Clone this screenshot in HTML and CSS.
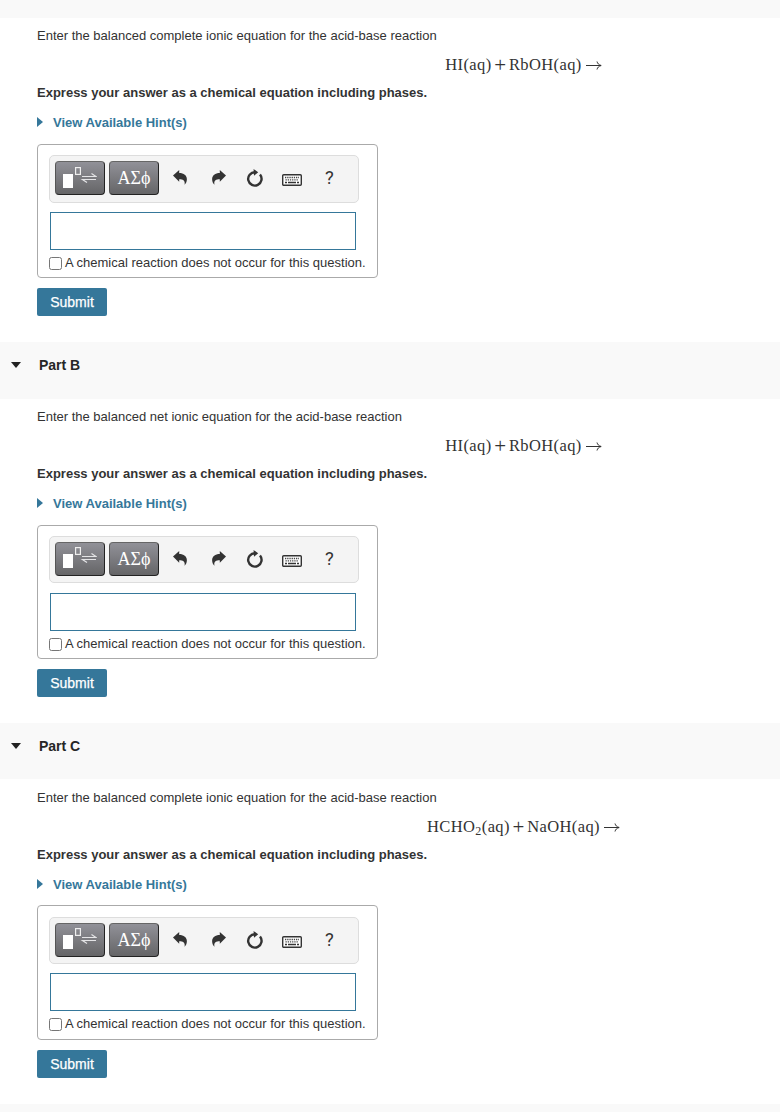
FILE: index.html
```html
<!DOCTYPE html>
<html lang="en">
<head>
    <meta charset="UTF-8">
    <meta name="viewport" content="width=device-width, initial-scale=1.0">
    <title>Acid-Base Reactions</title>
    <link rel="stylesheet" href="styles.css">
</head>
<body>

<!-- Shared icons -->
<svg class="sprite" aria-hidden="true">
    <symbol id="icon-template" viewBox="0 0 34 24">
        <rect x="0" y="9" width="10" height="14" fill="#fff"/>
        <rect x="12.6" y="2.6" width="4.8" height="6.8" fill="none" stroke="#eee" stroke-width="1.2"/>
        <path d="M19 11.500h14L28.500 8.600M33 14.500H19.500l4.500 3" fill="none" stroke="#e4e4e6" stroke-width="1.2"/>
    </symbol>
    <symbol id="icon-undo" viewBox="0 0 14 15">
        <path d="M0 5.400L6.200 0v3c5 0 8.200 2.800 7.600 7.300-.2 1.700-.9 3.200-2.300 4.400.8-3.500-.5-5.500-5.300-5.500v2.500z" fill="#333"/>
    </symbol>
    <symbol id="icon-reset" viewBox="0 0 18 18">
        <path d="M9 3.200A6.700 6.700 0 1 0 14 5.600" fill="none" stroke="#333" stroke-width="2.400"/>
        <path d="M7.600 0l4.600 3.200-4.200 3.600z" fill="#333"/>
    </symbol>
    <symbol id="icon-keyboard" viewBox="0 0 20 12">
        <rect x=".7" y=".7" width="18.600" height="10.600" rx="1" fill="#fff" stroke="#333" stroke-width="1.400"/>
        <path d="M3 3.500h14M3.500 5.800h13" stroke="#444" stroke-width="1.300" stroke-dasharray="1.300 .9"/>
        <path d="M3 8.500h2M6 8.500h8M15 8.500h2" stroke="#333" stroke-width="1.300"/>
    </symbol>
    <symbol id="icon-arrow" viewBox="0 0 16 10">
        <path d="M0 5.500h15M11 1.500c.5 2 1.700 3.300 4.200 4-2.500.7-3.700 2-4.200 4" fill="none" stroke="#333" stroke-width="1"/>
    </symbol>
</svg>

<main class="parts">
    <section class="part">
        <header class="part-header part-header-cut"></header>
        <div class="part-body">
            <p class="question">Enter the balanced complete ionic equation for the acid-base reaction</p>
            <div class="equation">HI(aq)<span class="plus">+</span>RbOH(aq)<svg class="yields"><use href="#icon-arrow"/></svg></div>
            <p class="instructions">Express your answer as a chemical equation including phases.</p>
            <a class="hints"><span class="hint-marker"></span>View Available Hint(s)</a>
            <div class="answer-box">
                <div class="toolbar">
                    <button class="tool-btn"><svg class="template-icon"><use href="#icon-template"/></svg></button>
                    <button class="tool-btn greek">ΑΣϕ</button>
                    <svg class="icon undo"><use href="#icon-undo"/></svg>
                    <svg class="icon redo"><use href="#icon-undo"/></svg>
                    <svg class="icon reset"><use href="#icon-reset"/></svg>
                    <svg class="icon keyboard"><use href="#icon-keyboard"/></svg>
                    <span class="help">?</span>
                </div>
                <div class="answer-input"></div>
                <label class="no-reaction"><input type="checkbox">A chemical reaction does not occur for this question.</label>
            </div>
            <button class="submit">Submit</button>
        </div>
    </section>

    <section class="part">
        <header class="part-header"><span class="collapse-marker"></span><h2>Part B</h2></header>
        <div class="part-body">
            <p class="question">Enter the balanced net ionic equation for the acid-base reaction</p>
            <div class="equation">HI(aq)<span class="plus">+</span>RbOH(aq)<svg class="yields"><use href="#icon-arrow"/></svg></div>
            <p class="instructions">Express your answer as a chemical equation including phases.</p>
            <a class="hints"><span class="hint-marker"></span>View Available Hint(s)</a>
            <div class="answer-box">
                <div class="toolbar">
                    <button class="tool-btn"><svg class="template-icon"><use href="#icon-template"/></svg></button>
                    <button class="tool-btn greek">ΑΣϕ</button>
                    <svg class="icon undo"><use href="#icon-undo"/></svg>
                    <svg class="icon redo"><use href="#icon-undo"/></svg>
                    <svg class="icon reset"><use href="#icon-reset"/></svg>
                    <svg class="icon keyboard"><use href="#icon-keyboard"/></svg>
                    <span class="help">?</span>
                </div>
                <div class="answer-input"></div>
                <label class="no-reaction"><input type="checkbox">A chemical reaction does not occur for this question.</label>
            </div>
            <button class="submit">Submit</button>
        </div>
    </section>

    <section class="part">
        <header class="part-header"><span class="collapse-marker"></span><h2>Part C</h2></header>
        <div class="part-body">
            <p class="question">Enter the balanced complete ionic equation for the acid-base reaction</p>
            <div class="equation">HCHO<sub>2</sub>(aq)<span class="plus">+</span>NaOH(aq)<svg class="yields"><use href="#icon-arrow"/></svg></div>
            <p class="instructions">Express your answer as a chemical equation including phases.</p>
            <a class="hints"><span class="hint-marker"></span>View Available Hint(s)</a>
            <div class="answer-box">
                <div class="toolbar">
                    <button class="tool-btn"><svg class="template-icon"><use href="#icon-template"/></svg></button>
                    <button class="tool-btn greek">ΑΣϕ</button>
                    <svg class="icon undo"><use href="#icon-undo"/></svg>
                    <svg class="icon redo"><use href="#icon-undo"/></svg>
                    <svg class="icon reset"><use href="#icon-reset"/></svg>
                    <svg class="icon keyboard"><use href="#icon-keyboard"/></svg>
                    <span class="help">?</span>
                </div>
                <div class="answer-input"></div>
                <label class="no-reaction"><input type="checkbox">A chemical reaction does not occur for this question.</label>
            </div>
            <button class="submit">Submit</button>
        </div>
    </section>

    <header class="part-header"></header>
</main>

</body>
</html>
```
FILE: styles.css
```css
:root {
    --accent: #35779a;
    --text: #333;
    --header-bg: #f9f9f9;
}

* {
    box-sizing: border-box;
}

body {
    margin: 0;
    background: #fff;
    color: var(--text);
    font-family: "Liberation Sans", Arial, Helvetica, sans-serif;
    font-size: 13px;
}

.sprite {
    display: none;
}

.parts {
    height: 1112px;
    overflow: hidden;
}

.part-header {
    display: flex;
    align-items: flex-start;
    height: 56.5px;
    padding: 13px 11px;
    background: var(--header-bg);
}

.part-header-cut {
    height: 18px;
    padding: 0;
}

.part-header h2 {
    margin: 0 0 0 18px;
    font-size: 14px;
    line-height: 20px;
    color: #262626;
}

.collapse-marker {
    margin-top: 7px;
    border: 5px solid transparent;
    border-top: 6px solid #222;
    border-bottom: 0;
}

/* Body is wider than the window, equations are centred on it */
.part-body {
    display: flex;
    flex-direction: column;
    align-items: flex-start;
    width: 1010px;
    height: 324.2px;
    padding: 8.3px 0 0 37px;
}

.question,
.instructions {
    margin: 0;
    line-height: 20px;
}

.equation {
    display: flex;
    align-items: baseline;
    justify-content: center;
    width: 100%;
    height: 37px;
    line-height: 38px;
    font-family: "Liberation Serif", "Times New Roman", serif;
    font-size: 16.5px;
    letter-spacing: 0.4px;
}

.equation sub {
    font-size: 12px;
    line-height: 0;
    transform: translateY(3px);
}

.plus {
    margin: 0 2.5px;
    font-size: 21px;
    line-height: 0;
    transform: translateY(2px);
}

.yields {
    width: 16px;
    height: 10px;
    margin-left: 4px;
}

.instructions {
    font-weight: bold;
}

.hints {
    display: flex;
    height: 20px;
    margin-top: 10px;
    line-height: 20px;
    font-weight: bold;
    color: var(--accent);
}

.hint-marker {
    width: 6px;
    height: 10px;
    margin: 4px 10px 0 0;
    border: 5px solid transparent;
    border-left: 6px solid var(--accent);
    border-right: 0;
}

.answer-box {
    width: 341px;
    height: 134.3px;
    margin-top: 10.7px;
    padding: 10.3px 11px 0;
    border: 1px solid #aaa;
    border-radius: 4px;
}

.toolbar {
    display: flex;
    align-items: flex-start;
    width: 310px;
    height: 47.5px;
    padding: 5px;
    background: #f4f4f4;
    border: 1px solid #ddd;
    border-radius: 5px;
}

.tool-btn {
    width: 50px;
    height: 34px;
    margin: 0 4px 0 0;
    padding: 0;
    border: 1px solid #222;
    border-top-color: #666;
    border-left-color: #555;
    border-radius: 4px;
    background: linear-gradient(#919198, #656567);
    color: #fff;
}

.template-icon {
    display: block;
    width: 34px;
    height: 24px;
    margin: -3px 0 0 7px;
}

.greek {
    font-family: "Liberation Serif", "Times New Roman", serif;
    font-size: 18px;
    line-height: 30px;
}

.icon {
    flex: none;
}

.undo,
.redo {
    width: 14px;
    height: 15px;
    margin: 9px 0 0 10px;
}

.redo {
    margin-left: 25px;
    transform: scaleX(-1);
}

.reset {
    width: 18px;
    height: 18px;
    margin: 8px 0 0 20px;
}

.keyboard {
    width: 20px;
    height: 12px;
    margin: 13px 0 0 18px;
}

.help {
    margin: 6px 0 0 23px;
    font-family: Roboto, sans-serif;
    font-size: 18.5px;
    line-height: 22px;
}

.answer-input {
    width: 306px;
    height: 38px;
    margin: 9.2px 0 0 1px;
    border: 1px solid var(--accent);
}

.no-reaction {
    display: flex;
    align-items: center;
    height: 25.1px;
    white-space: nowrap;
}

.no-reaction input {
    width: 13px;
    height: 13px;
    margin: 2px 3px 0 0;
}

.submit {
    width: 70px;
    height: 28px;
    margin-top: 10px;
    padding: 0;
    border: 0;
    border-radius: 2px;
    background: var(--accent);
    color: #fff;
    font-family: inherit;
    font-size: 14px;
    -webkit-text-stroke: 0.25px #fff;
}
```
